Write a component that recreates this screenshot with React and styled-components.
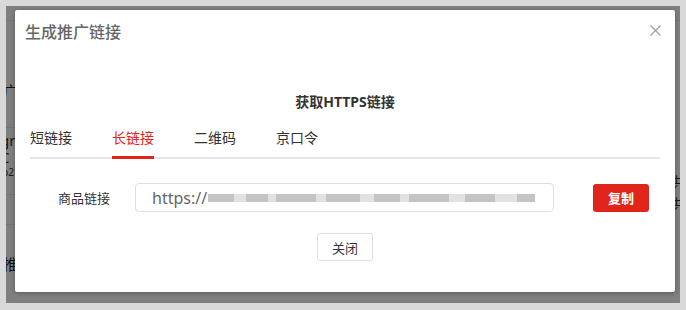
import React from "react";
import styled, { createGlobalStyle } from "styled-components";

const GlobalStyle = createGlobalStyle`
  html, body {
    margin: 0;
    padding: 0;
    background: #d9d9d9;
    font-family: "Noto Sans", "Noto Sans CJK SC", sans-serif;
  }
`;

const tabs = ["短链接", "长链接", "二维码", "京口令"];

// widths of the pixelated (hidden) part of the url
const mosaic = [26, 12, 22, 8, 40, 10, 34, 14, 26, 9, 40, 16, 30, 22, 18];

function App() {
  const [active, setActive] = React.useState(1);

  return (
    <Frame>
      <GlobalStyle />
      <Viewport>
        <Page>
          <TopBar />
          <PageBody>
            <LeftCol>
              <Cell $h={107} $pt={61}>广</Cell>
              <Cell $h={67} $pt={4}>
                <small>gr</small>
                <small>C</small>
                <tiny>p2</tiny>
              </Cell>
              <Cell $h={30} />
              <Cell $h={70} $pt={30} $border={false}>推</Cell>
            </LeftCol>
            <RightCol>
              <RightText>共</RightText>
              <RightText>共</RightText>
            </RightCol>
          </PageBody>
        </Page>

        <Overlay>
          <Modal>
            <Header>
              <Title>生成推广链接</Title>
              <CloseIcon aria-label="close">
                <svg width="11" height="11" viewBox="0 0 11 11">
                  <path d="M0.5 0.5 L10.5 10.5 M10.5 0.5 L0.5 10.5" stroke="#a0a0a0" strokeWidth="1.2" />
                </svg>
              </CloseIcon>
            </Header>

            <Body>
              <SubTitle>获取HTTPS链接</SubTitle>
              <TabBar>
                {tabs.map((t, i) => (
                  <Tab key={t} $active={i === active} onClick={() => setActive(i)}>
                    {t}
                  </Tab>
                ))}
              </TabBar>

              <LinkRow>
                <Label>商品链接</Label>
                <LinkBox>
                  <span>https://</span>
                  <Blurred>
                    {mosaic.map((w, i) => (
                      <Piece key={i} $dark={i % 2 === 0} style={{ width: w }} />
                    ))}
                  </Blurred>
                </LinkBox>
                <CopyButton>复制</CopyButton>
              </LinkRow>

              <Footer>
                <PlainButton>关闭</PlainButton>
              </Footer>
            </Body>
          </Modal>
        </Overlay>
      </Viewport>
    </Frame>
  );
}

const Frame = styled.div`
  padding: 6px 6px 7px 6px;
  width: 674px;
`;

const Viewport = styled.div`
  position: relative;
  width: 674px;
  height: 297px;
  overflow: hidden;
  background: #fff;
`;

const Page = styled.div`
  display: flex;
  flex-direction: column;
  height: 100%;
`;

const TopBar = styled.div`
  height: 14px;
  border-bottom: 1px solid #e8e8e8;
`;

const PageBody = styled.div`
  display: flex;
  justify-content: space-between;
  flex: 1;
`;

const LeftCol = styled.div`
  display: flex;
  flex-direction: column;
  width: 40px;
  margin-left: -3px;
`;

const Cell = styled.div`
  display: flex;
  flex-direction: column;
  height: ${(p) => p.$h}px;
  padding-top: ${(p) => p.$pt || 0}px;
  box-sizing: border-box;
  border-bottom: ${(p) => (p.$border === false ? "none" : "1px solid #e8e8e8")};
  font-size: 15px;
  line-height: 18px;
  color: #222;
  white-space: nowrap;

  small {
    font-size: 15px;
    line-height: 17px;
    margin-left: -3px;
    color: #333;
  }
  tiny {
    font-size: 10px;
    line-height: 12px;
    margin-left: -1px;
    color: #333;
  }
`;

const RightCol = styled.div`
  display: flex;
  flex-direction: column;
  gap: 6px;
  padding-top: 153px;
  margin-right: -8px;
  width: 16px;
`;

const RightText = styled.span`
  font-size: 14px;
  line-height: 16px;
  color: #333;
`;

const Overlay = styled.div`
  position: absolute;
  inset: 0;
  background: rgba(0, 0, 0, 0.5);
  padding: 4px 0 0 9px;
`;

const Modal = styled.div`
  width: 660px;
  height: 282px;
  background: #fff;
  border-radius: 2px;
  box-shadow: 0 1px 4px rgba(0, 0, 0, 0.3);
  display: flex;
  flex-direction: column;
`;

const Header = styled.div`
  display: flex;
  align-items: flex-start;
  justify-content: space-between;
  padding: 10px 14px 0 10px;
`;

const Title = styled.div`
  font-size: 16px;
  line-height: 24px;
  color: #666;
  font-weight: 500;
`;

const CloseIcon = styled.button`
  border: none;
  background: none;
  padding: 0;
  margin-top: 5px;
  width: 11px;
  height: 11px;
  display: flex;
  cursor: pointer;
`;

const Body = styled.div`
  display: flex;
  flex-direction: column;
  padding: 0 15px;
`;

const SubTitle = styled.div`
  margin-top: 48px;
  text-align: center;
  font-size: 14px;
  line-height: 20px;
  font-weight: 700;
  color: #333;
`;

const TabBar = styled.div`
  display: flex;
  gap: 40px;
  margin-top: 16px;
  border-bottom: 2px solid #e4e6eb;
`;

const Tab = styled.div`
  font-size: 14px;
  line-height: 20px;
  padding-bottom: 8px;
  margin-bottom: -2px;
  color: ${(p) => (p.$active ? "#e1251b" : "#333")};
  border-bottom: 3px solid ${(p) => (p.$active ? "#e1251b" : "transparent")};
  cursor: pointer;
`;

const LinkRow = styled.div`
  display: flex;
  align-items: center;
  margin-top: 24px;
  padding-left: 28px;
`;

const Label = styled.div`
  font-size: 13px;
  color: #333;
  width: 77px;
`;

const LinkBox = styled.div`
  display: flex;
  align-items: center;
  width: 419px;
  height: 29px;
  box-sizing: border-box;
  border: 1px solid #dcdfe6;
  border-radius: 4px;
  padding: 0 12px 0 16px;
  font-size: 16px;
  color: #666;
  overflow: hidden;
  white-space: nowrap;
`;

const Blurred = styled.span`
  display: flex;
  align-items: center;
  height: 10px;
  margin-left: 1px;
  filter: blur(0.6px);
`;

const Piece = styled.i`
  display: block;
  flex-shrink: 0;
  height: 8px;
  background: ${(p) => (p.$dark ? "#c4c4c4" : "#e2e2e2")};
`;

const CopyButton = styled.button`
  margin-left: 39px;
  width: 56px;
  height: 28px;
  border: none;
  border-radius: 3px;
  background: #e1251b;
  color: #fff;
  font-family: "Noto Sans CJK SC", sans-serif;
  font-size: 13px;
  font-weight: 700;
  cursor: pointer;
`;

const Footer = styled.div`
  display: flex;
  justify-content: center;
  margin-top: 21px;
`;

const PlainButton = styled.button`
  width: 56px;
  height: 28px;
  background: #fff;
  border: 1px solid #dcdfe6;
  border-radius: 3px;
  color: #333;
  font-family: "Noto Sans CJK SC", sans-serif;
  font-size: 13px;
  cursor: pointer;
`;

export default App;
